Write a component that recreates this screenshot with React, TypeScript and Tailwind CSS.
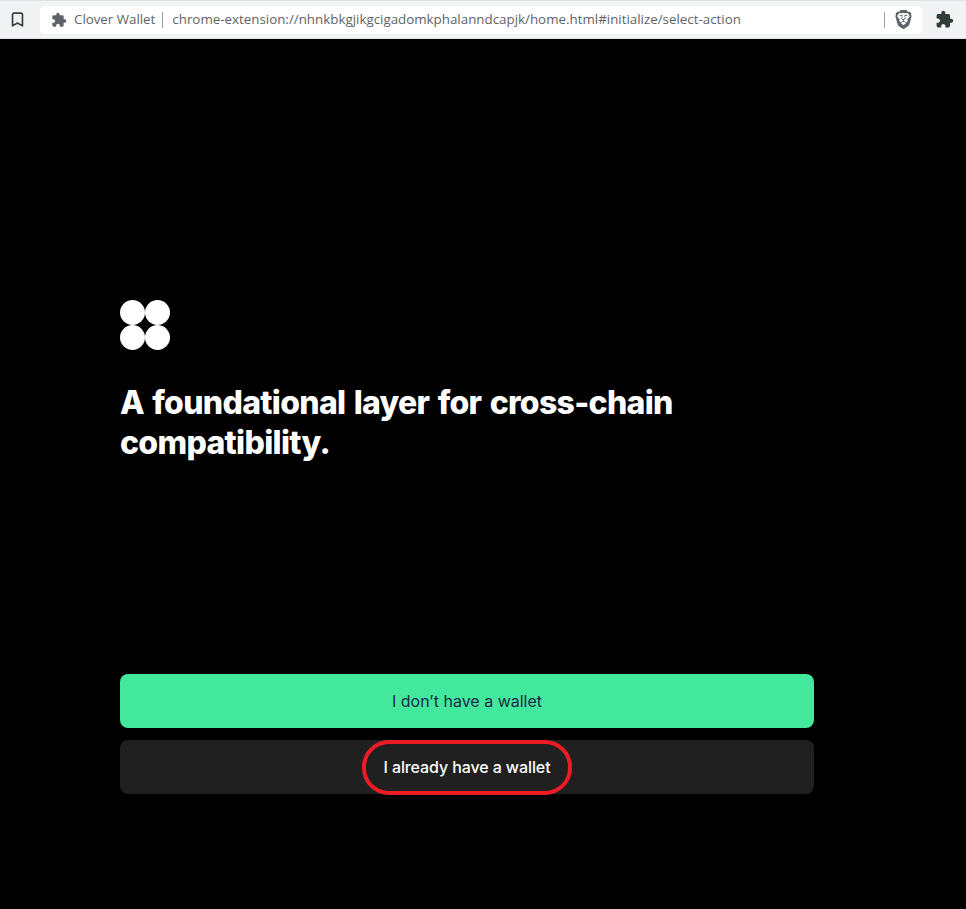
import { Bookmark } from 'lucide-react';
import { MdExtension } from 'react-icons/md';
import { SiBrave } from 'react-icons/si';

function BrowserBar() {
  return (
    <div className="h-[39px] bg-[#f1f3f4] border-t border-[#dfe1e5] border-b border-b-[#e3e3e3] flex items-center font-['Open_Sans',sans-serif]">
      <div className="w-[40px] flex justify-center">
        <Bookmark size={17} strokeWidth={2.4} className="text-[#3c4043] mr-[5px]" />
      </div>
      <div className="w-[882px] h-[28px] bg-white rounded-[5px] flex items-center pl-[11px] pr-[8px]">
        <MdExtension size={16} className="text-[#5f6368]" />
        <span className="ml-[7px] text-[13.3px] text-[#5f6368] whitespace-nowrap">Clover Wallet</span>
        <div className="ml-[7px] w-px h-[16px] bg-[#9aa0a6]" />
        <span className="ml-[9px] text-[13.35px] text-[#5f6368] whitespace-nowrap">
          chrome-extension://nhnkbkgjikgcigadomkphalanndcapjk/home.html#initialize/select-action
        </span>
        <div className="ml-auto w-px h-[16px] bg-[#9aa0a6]" />
        <SiBrave size={19} className="ml-[9px] mr-[1px] text-[#5f6368]" />
      </div>
      <div className="flex-1 flex justify-center">
        <MdExtension size={19} className="text-[#2f3e38]" />
      </div>
    </div>
  );
}

function Logo() {
  return (
    <div className="grid grid-cols-2 w-[50px] h-[50px]">
      <div className="w-[25px] h-[25px] rounded-full bg-white" />
      <div className="w-[25px] h-[25px] rounded-full bg-white" />
      <div className="w-[25px] h-[25px] rounded-full bg-white" />
      <div className="w-[25px] h-[25px] rounded-full bg-white" />
    </div>
  );
}

export default function App() {
  return (
    <div className="h-[909px] bg-black flex flex-col overflow-hidden font-['Inter',sans-serif]">
      <BrowserBar />
      <main className="flex-1 pl-[120px] pr-[152px] pt-[261px]">
        <Logo />
        <h1 className="mt-[33px] w-[600px] text-[32px] leading-[40px] font-extrabold tracking-[-0.7px] [word-spacing:2px] text-white">
          A foundational layer for cross-chain compatibility.
        </h1>
        <div className="mt-[211px] flex flex-col gap-[12px]">
          <button className="h-[54px] rounded-[8px] bg-[#42e89b] text-[16px] text-[#1c2b4a]">
            I don’t have a wallet
          </button>
          <button className="h-[54px] rounded-[8px] bg-[#202020] text-[16px] font-medium text-white flex items-center justify-center">
            <span className="w-[210px] h-[55px] flex items-center justify-center rounded-[27px] border-4 border-[#ed1c24] tracking-[-0.1px]">
              I already have a wallet
            </span>
          </button>
        </div>
      </main>
    </div>
  );
}
